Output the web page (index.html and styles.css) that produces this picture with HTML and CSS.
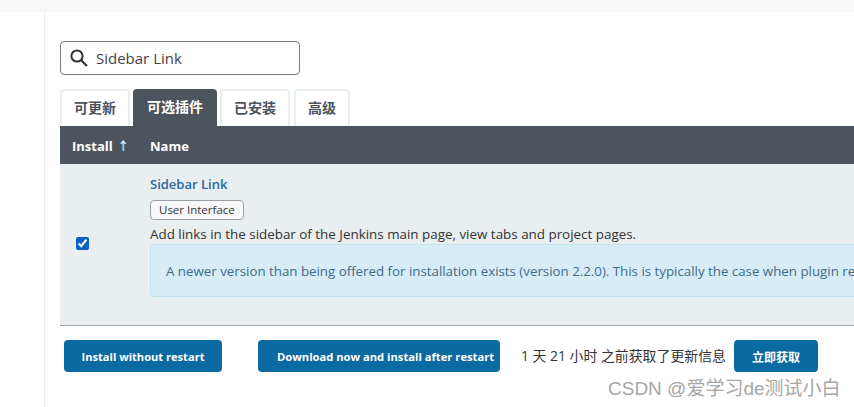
FILE: index.html
```html
<!DOCTYPE html>
<html>

<head>
    <meta charset="utf-8">
    <link rel="stylesheet" href="styles.css">
</head>

<body>
    <div class="topbar"></div>
    <div class="page">
        <div class="side"></div>
        <div class="main">
            <div class="search">
                <svg class="search-icon" width="20" height="20" viewBox="0 0 20 20">
                    <circle cx="8" cy="8" r="5.6" fill="none" stroke="#333" stroke-width="2"/>
                    <path d="M12 12l6 6" fill="none" stroke="#333" stroke-width="2.2"/>
                </svg>
                <span>Sidebar Link</span>
            </div>
            <div class="tabs">
                <a class="tab">可更新</a>
                <a class="tab active">可选插件</a>
                <a class="tab">已安装</a>
                <a class="tab">高级</a>
            </div>
            <div class="table-wrap">
                <table class="plugins">
                    <tr>
                        <th class="col-install">Install <span class="sort">↑</span></th>
                        <th class="col-name">Name</th>
                    </tr>
                    <tr>
                        <td class="check"><input type="checkbox" checked></td>
                        <td class="info">
                            <a class="plugin-name">Sidebar Link</a>
                            <div><span class="label">User Interface</span></div>
                            <div class="desc">Add links in the sidebar of the Jenkins main page, view tabs and project pages.</div>
                            <div class="alert">A newer version than being offered for installation exists (version 2.2.0). This is typically the case when plugin re</div>
                        </td>
                    </tr>
                </table>
            </div>
            <div class="bottom">
                <a class="btn first">Install without restart</a>
                <a class="btn second">Download now and install after restart</a>
                <span class="updated">1 天 21 小时 之前获取了更新信息</span>
                <a class="btn third">立即获取</a>
            </div>
        </div>
    </div>
    <div class="watermark">CSDN @爱学习de测试小白</div>
</body>

</html>
```

FILE: styles.css
```css
html, body {
    margin: 0;
    height: 407px;
    overflow: hidden;
    background: #fff;
}
body {
    position: relative;
    color: #333;
    font-family: "Open Sans", "Noto Sans CJK SC", sans-serif;
    font-size: 13.4px;
}
.topbar {
    height: 12px;
    background: #f8f8f8;
}
.page {
    display: flex;
    height: 395px;
}
.side {
    width: 44px;
    flex: none;
    border-right: 1px solid #e9eef1;
}
.main {
    width: 900px;
    flex: none;
    padding: 29px 0 0 15px;
}
.search {
    display: flex;
    align-items: center;
    box-sizing: border-box;
    width: 240px;
    height: 34px;
    padding-left: 8px;
    border: 1px solid #7a7a7a;
    border-radius: 4px;
    font-size: 15px;
    color: #444;
}
.search-icon {
    margin-right: 7px;
}
.tabs {
    display: flex;
    gap: 3px;
    margin-top: 14px;
    height: 37px;
}
.tab {
    box-sizing: border-box;
    padding: 0 12px;
    line-height: 33px;
    height: 37px;
    border: 2px solid #e9eef1;
    border-bottom: 0;
    border-radius: 4px 4px 0 0;
    font-size: 14px;
    font-weight: 600;
    color: #4d545d;
}
.tab:last-child {
    margin-left: 1px;
}
.tab.active {
    padding: 0 14px;
    line-height: 36px;
    border: 0;
    background: #4d545d;
    color: #fff;
}
.plugins {
    width: 100%;
    table-layout: fixed;
    border-collapse: collapse;
}
.plugins th {
    height: 38px;
    padding: 1px 0 0 11px;
    box-sizing: border-box;
    background: #4d545d;
    color: #fff;
    text-align: left;
    font-size: 13px;
    font-weight: 700;
    white-space: nowrap;
}
.plugins th.col-install {
    width: 79px;
    padding: 2px 0 0 12px;
}
.sort {
    margin-left: 1px;
    color: #c9eefc;
    font-size: 12px;
    font-weight: 700;
}
.plugins td {
    height: 150px;
    padding: 0;
    background: #e9eef1;
    border-bottom: 1px solid #a2a7ab;
    vertical-align: top;
}
.plugins td.check {
    vertical-align: middle;
    padding-left: 16px;
}
.check input {
    display: block;
    width: 13px;
    height: 13px;
    margin: 0 0 2px;
    accent-color: #0b5fc6;
}
.plugins td.info {
    padding: 11px 0 0 11px;
}
.plugin-name {
    display: block;
    line-height: 18px;
    color: #2a6a9e;
    font-weight: 600;
    font-size: 13px;
}
.label {
    display: block;
    width: fit-content;
    box-sizing: border-box;
    height: 20px;
    margin-top: 7px;
    padding: 0 8px;
    border: 1px solid #9a9fa3;
    border-radius: 4px;
    background: #f8f8f8;
    font-size: 11.5px;
    line-height: 18px;
}
.desc {
    margin-top: 5px;
    line-height: 18px;
    white-space: nowrap;
}
.alert {
    box-sizing: border-box;
    height: 53px;
    margin-top: 1px;
    padding: 1px 0 0 15px;
    border: 1px solid #bee5f0;
    border-radius: 4px;
    background: #d7ecf6;
    color: #3f6b88;
    font-size: 13.3px;
    line-height: 50px;
    white-space: nowrap;
    overflow: hidden;
}
.bottom {
    display: flex;
    align-items: center;
    margin-top: 14px;
    height: 32px;
    padding-left: 4px;
}
.btn {
    box-sizing: border-box;
    height: 32px;
    padding-top: 1px;
    border-radius: 4px;
    background: #0b6aa2;
    color: #fff;
    font-size: 11.1px;
    font-weight: 700;
    line-height: 32px;
    text-align: center;
    white-space: nowrap;
}
.first {
    width: 158px;
}
.second {
    width: 242px;
    margin-left: 36px;
    padding-left: 19px;
    text-align: left;
    font-size: 11.2px;
}
.third {
    width: 84px;
    padding-top: 3px;
    font-size: 12px;
    line-height: 29px;
}
.updated {
    margin: 0 8px 2px 21px;
    color: #333;
    font-size: 13.9px;
    white-space: nowrap;
}
.watermark {
    position: absolute;
    left: 608px;
    top: 373px;
    color: #a6a6a6;
    font-family: "Liberation Sans", "Noto Sans CJK SC", sans-serif;
    font-size: 19px;
    white-space: nowrap;
}
```
